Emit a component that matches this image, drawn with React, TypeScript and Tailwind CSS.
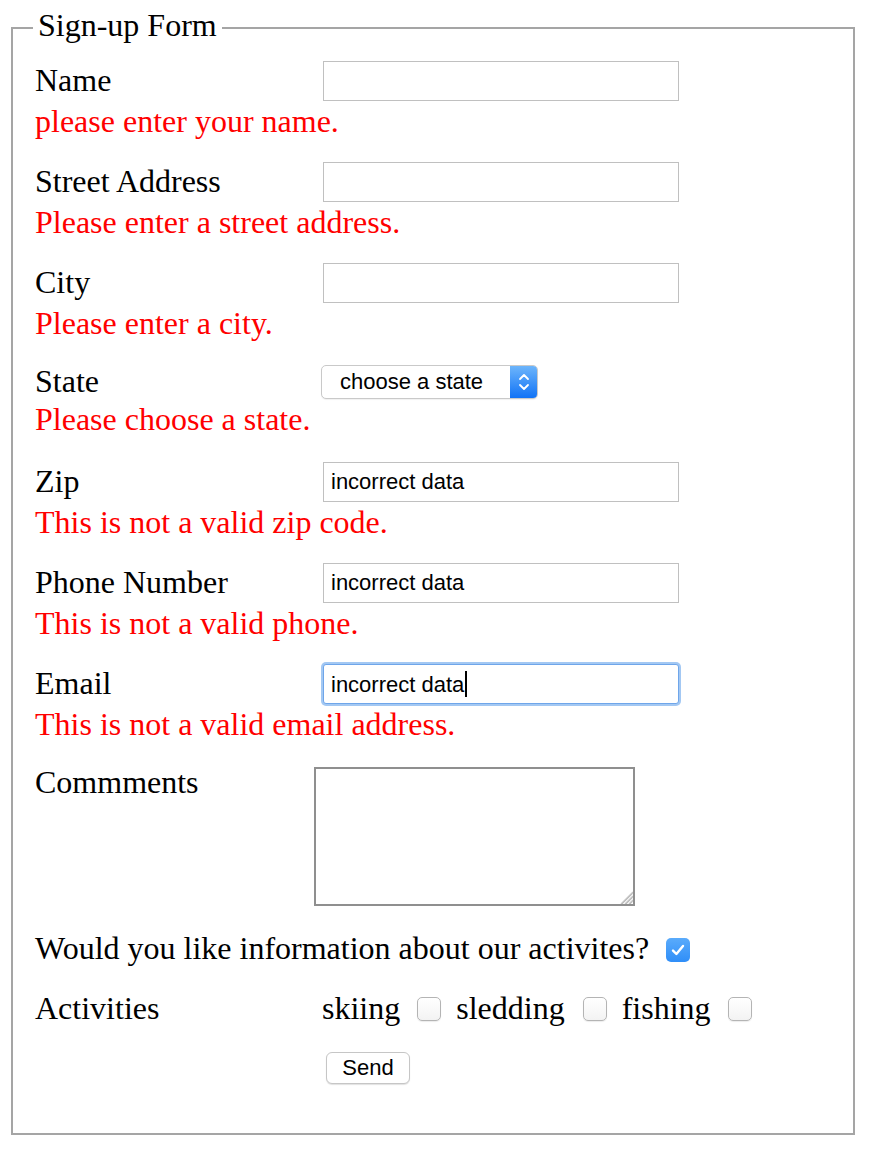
import React from "react";

const LABEL = "w-[288px] shrink-0 text-[32px] leading-[38px] text-black";
const ERR = "text-[32px] leading-[40px] text-[#ff0000]";
const INPUT =
  "w-[356px] h-[40px] border border-[#c0c0c0] bg-white px-[7px] text-[22px] text-black font-['Liberation_Sans',Arial,sans-serif] outline-none";

function Box({ checked = false }: { checked?: boolean }) {
  if (checked) {
    return (
      <div className="w-[24px] h-[24px] rounded-[5px] bg-[linear-gradient(#5aabfb,#2f8ef8)] flex items-center justify-center shrink-0">
        <svg width="18" height="18" viewBox="0 0 18 18" fill="none">
          <path d="M4 9.6 L7.4 13 L14 5" stroke="white" strokeWidth="2.4" strokeLinecap="round" strokeLinejoin="round" />
        </svg>
      </div>
    );
  }
  return (
    <div className="w-[24px] h-[24px] rounded-[5px] border border-[#b4b4b4] bg-[linear-gradient(#ffffff,#f3f3f3)] shadow-[0_1px_1px_rgba(0,0,0,0.08)] shrink-0" />
  );
}

function Field({ label, value, error, mb }: { label: string; value?: string; error: string; mb: string }) {
  return (
    <div className={mb}>
      <div className="flex items-start h-[40px]">
        <div className={LABEL}>{label}</div>
        <input className={INPUT} readOnly value={value ?? ""} />
      </div>
      <div className={ERR}>{error}</div>
    </div>
  );
}

export default function App() {
  return (
    <div className="bg-white min-h-[1158px] pt-[5px] pl-[11px] font-['Liberation_Serif','Times_New_Roman',serif] text-black">
      <fieldset className="w-[844px] border-2 border-[#a5a5a5] pl-[22px] pr-[22px] pt-[10px] pb-[49px] m-0">
        <legend className="-ml-[2px] px-[5px] text-[32px] leading-[40px] pb-[6px]">Sign-up Form</legend>

        <Field label="Name" error="please enter your name." mb="mb-[21px]" />
        <Field label="Street Address" error="Please enter a street address." mb="mb-[21px]" />
        <Field label="City" error="Please enter a city." mb="mb-[19px]" />

        <div className="mb-[23px]">
          <div className="flex items-start h-[37px]">
            <div className={LABEL}>State</div>
            <div className="-ml-[2px] mt-[3px] w-[217px] h-[34px] rounded-[5px] border border-[#c9c9c9] bg-white flex items-center overflow-hidden shadow-[0_1px_1px_rgba(0,0,0,0.06)] font-['Liberation_Sans',Arial,sans-serif]">
              <span className="flex-1 pl-[18px] text-[22px] leading-[34px] text-black">choose a state</span>
              <div className="w-[27px] h-full bg-[linear-gradient(#6db5fb,#1173f6)] flex items-center justify-center">
                <svg width="14" height="22" viewBox="0 0 14 22" fill="none">
                  <path d="M3 8 L7 4 L11 8" stroke="white" strokeWidth="1.8" strokeLinecap="round" strokeLinejoin="round" />
                  <path d="M3 14 L7 18 L11 14" stroke="white" strokeWidth="1.8" strokeLinecap="round" strokeLinejoin="round" />
                </svg>
              </div>
            </div>
          </div>
          <div className={ERR}>Please choose a state.</div>
        </div>

        <Field label="Zip" value="incorrect data" error="This is not a valid zip code." mb="mb-[21px]" />
        <Field label="Phone Number" value="incorrect data" error="This is not a valid phone." mb="mb-[21px]" />

        <div className="mb-[19px]">
          <div className="flex items-start h-[40px]">
            <div className={LABEL}>Email</div>
            <div className="w-[356px] h-[40px] border border-[#6fa6ea] rounded-[3px] shadow-[0_0_0_2px_#a3c8f3] bg-white pl-[7px] flex items-center text-[22px] text-black font-['Liberation_Sans',Arial,sans-serif]">
              <span>incorrect data</span>
              <span className="inline-block w-[2px] h-[26px] bg-black ml-[1px]" />
            </div>
          </div>
          <div className={ERR}>This is not a valid email address.</div>
        </div>

        <div className="flex items-start">
          <div className="w-[279px] shrink-0 text-[32px] leading-[38px]">Commments</div>
          <div className="relative mt-[4px] w-[321px] h-[139px] border-2 border-[#8f8f8f] bg-white">
            <svg className="absolute right-0 bottom-0" width="13" height="13" viewBox="0 0 13 13" fill="none">
              <path d="M1 13 L13 1" stroke="#c4c4c4" strokeWidth="1.2" />
              <path d="M5 13 L13 5" stroke="#c4c4c4" strokeWidth="1.2" />
              <path d="M9 13 L13 9" stroke="#c4c4c4" strokeWidth="1.2" />
              <path d="M2.2 13 L13 2.2" stroke="#8a8a8a" strokeWidth="0.6" />
              <path d="M6.2 13 L13 6.2" stroke="#8a8a8a" strokeWidth="0.6" />
              <path d="M10.2 13 L13 10.2" stroke="#8a8a8a" strokeWidth="0.6" />
            </svg>
          </div>
        </div>

        <div className="mt-[23px] flex items-start h-[34px]">
          <span className="text-[32px] leading-[38px]">Would you like information about our activites?</span>
          <div className="ml-[17px] mt-[9px]">
            <Box checked />
          </div>
        </div>

        <div className="mt-[26px] flex items-start h-[34px]">
          <div className="w-[287px] shrink-0 text-[32px] leading-[38px]">Activities</div>
          <span className="text-[32px] leading-[38px]">skiing</span>
          <div className="ml-[17px] mr-[15px] mt-[8px]"><Box /></div>
          <span className="text-[32px] leading-[38px]">sledding</span>
          <div className="ml-[18px] mr-[15px] mt-[8px]"><Box /></div>
          <span className="text-[32px] leading-[38px]">fishing</span>
          <div className="ml-[17px] mt-[8px]"><Box /></div>
        </div>

        <div className="mt-[29px] ml-[291px]">
          <button className="w-[84px] h-[32px] rounded-[6px] border border-[#c6c6c6] bg-white shadow-[0_1px_1px_rgba(0,0,0,0.12)] text-[22px] leading-[30px] text-black font-['Liberation_Sans',Arial,sans-serif]">
            Send
          </button>
        </div>
      </fieldset>
    </div>
  );
}
